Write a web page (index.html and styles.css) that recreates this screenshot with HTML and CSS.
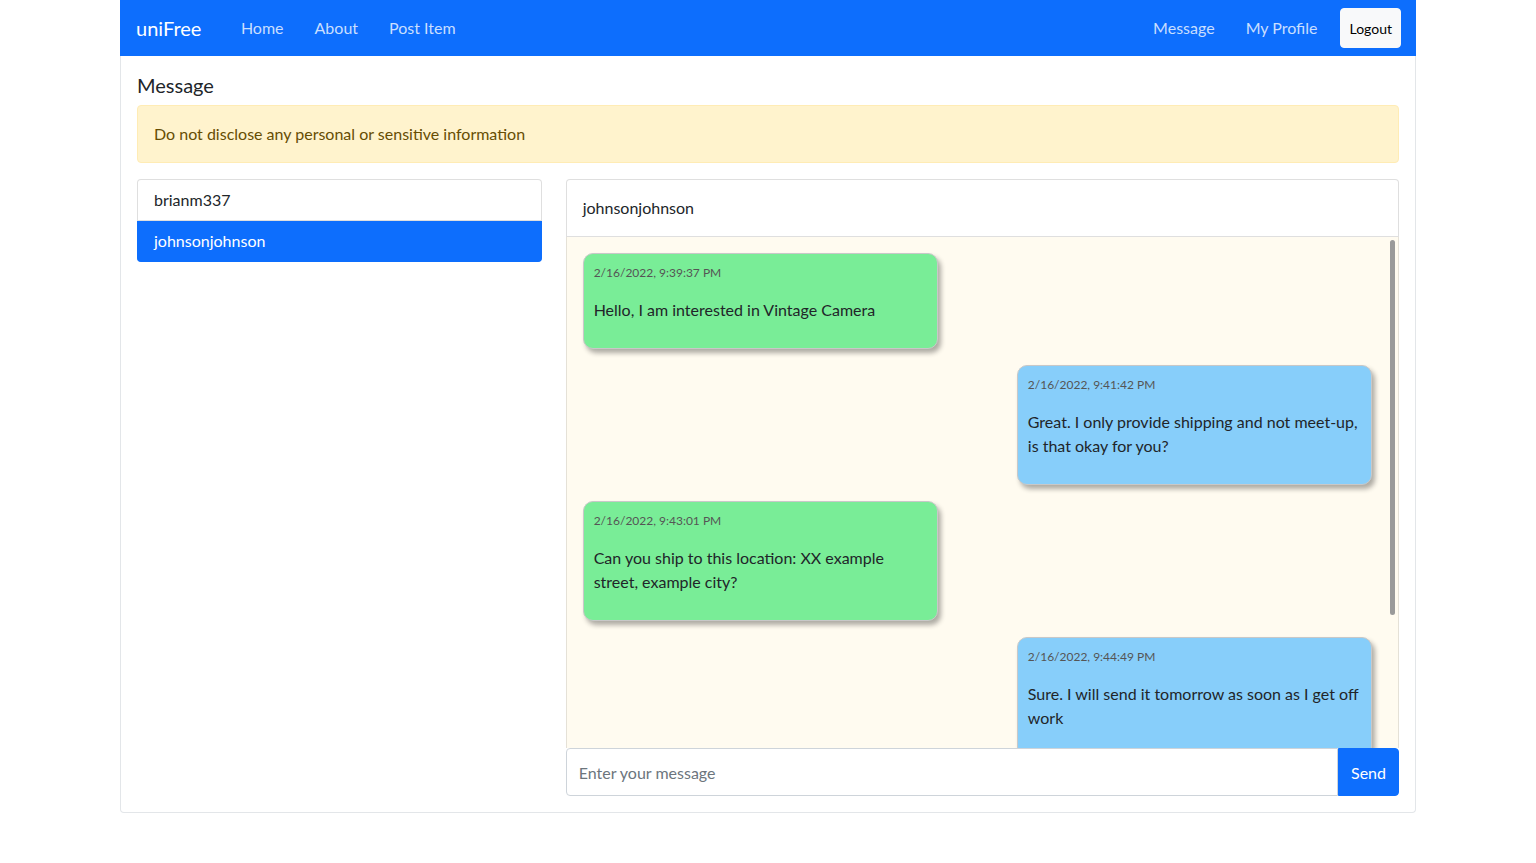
FILE: index.html
```html
<!DOCTYPE html>
<html lang="en">
<head>
<meta charset="utf-8">
<title>uniFree - Message</title>
<link rel="stylesheet" href="styles.css">
</head>
<body>
<div class="page">
  <nav class="navbar">
    <a class="brand" href="#">uniFree</a>
    <ul class="nav nav-left">
      <li><a class="nav-link" href="#">Home</a></li>
      <li><a class="nav-link" href="#">About</a></li>
      <li><a class="nav-link" href="#">Post Item</a></li>
    </ul>
    <ul class="nav nav-right">
      <li><a class="nav-link" href="#">Message</a></li>
      <li><a class="nav-link" href="#">My Profile</a></li>
      <li><button class="logout" type="button">Logout</button></li>
    </ul>
  </nav>
  <main class="card">
    <h5 class="title">Message</h5>
    <div class="alert">Do not disclose any personal or sensitive information</div>
    <div class="row">
      <div class="list">
        <div class="list-item">brianm337</div>
        <div class="list-item active">johnsonjohnson</div>
      </div>
      <section class="chat">
        <div class="chat-header">johnsonjohnson</div>
        <div class="chat-scroll">
          <div class="chat-body">
            <div class="bubble received">
              <p class="date">2/16/2022, 9:39:37 PM</p>
              <p class="text">Hello, I am interested in Vintage Camera</p>
            </div>
            <div class="bubble sent">
              <p class="date">2/16/2022, 9:41:42 PM</p>
              <p class="text">Great. I only provide shipping and not meet-up, is that okay for you?</p>
            </div>
            <div class="bubble received">
              <p class="date">2/16/2022, 9:43:01 PM</p>
              <p class="text">Can you ship to this location: XX example street, example city?</p>
            </div>
            <div class="bubble sent">
              <p class="date">2/16/2022, 9:44:49 PM</p>
              <p class="text">Sure. I will send it tomorrow as soon as I get off work</p>
            </div>
          </div>
          <div class="scroll-thumb"></div>
        </div>
        <form class="input-group">
          <input class="msg-input" type="text" placeholder="Enter your message">
          <button class="send" type="button">Send</button>
        </form>
      </section>
    </div>
  </main>
</div>
</body>
</html>
```

FILE: styles.css
```css
* { box-sizing: border-box; }

body {
  margin: 0;
  font-family: Lato, "Open Sans", sans-serif;
  font-size: 16px;
  line-height: 1.5;
  color: #212529;
  background: #fff;
}

.page {
  width: 1296px;
  margin: 0 auto;
}

/* Navbar */
.navbar {
  display: flex;
  align-items: center;
  height: 56px;
  padding: 0 15px 0 16px;
  background: #0d6efd;
}

.brand {
  font-size: 20px;
  color: #fff;
  text-decoration: none;
  margin-right: 24px;
}

.nav {
  display: flex;
  align-items: center;
  list-style: none;
  margin: 0;
  padding: 0;
}

.nav-right { margin-left: auto; }

.nav-link {
  display: block;
  padding: 8px 15.5px;
  color: rgba(255, 255, 255, 0.78);
  text-decoration: none;
}

.nav-right .nav-link { padding: 8px 16px 8px 15px; }

.logout {
  display: flex;
  align-items: center;
  height: 40px;
  margin-left: 7px;
  padding: 0 8px;
  font-family: inherit;
  font-size: 14px;
  color: #000;
  background: #f8f9fa;
  border: 1px solid #f8f9fa;
  border-radius: 4px;
}

/* Card */
.card {
  border: 1px solid #e3e6e9;
  border-top: none;
  border-radius: 0 0 4px 4px;
  padding: 17px 16px 16px;
}

.title {
  margin: 0 0 8px;
  font-size: 20px;
  font-weight: 400;
  line-height: 1.2;
}

.alert {
  padding: 16px;
  margin-bottom: 16px;
  color: #664d03;
  background: #fff3cd;
  border: 1px solid #ffecb5;
  border-radius: 4px;
}

.row {
  display: flex;
  gap: 24px;
  align-items: flex-start;
}

/* Contact list */
.list {
  width: calc((100% + 24px) / 3 - 24px);
  display: flex;
  flex-direction: column;
}

.list-item {
  padding: 8px 16px;
  border: 1px solid rgba(0, 0, 0, 0.125);
  background: #fff;
}

.list-item:first-child { border-radius: 4px 4px 0 0; }
.list-item + .list-item { border-top-width: 0; }
.list-item:last-child { border-radius: 0 0 4px 4px; }

.list-item.active {
  color: #fff;
  background: #0d6efd;
  border-color: #0d6efd;
}

/* Chat */
.chat {
  flex: 1;
  min-width: 0;
}

.chat-header {
  padding: 16px;
  background: #fff;
  border: 1px solid rgba(0, 0, 0, 0.125);
  border-radius: 4px 4px 0 0;
}

.chat-scroll {
  position: relative;
  height: 511px;
  background: #fffbf0;
  border-left: 1px solid rgba(0, 0, 0, 0.1);
  border-right: 1px solid rgba(0, 0, 0, 0.1);
}

.chat-body {
  height: 100%;
  overflow: hidden;
  padding: 16px 26px 16px 16px;
}

.scroll-thumb {
  position: absolute;
  top: 3px;
  right: 3px;
  width: 5px;
  height: 375px;
  background: #9a9a9a;
  border-radius: 3px;
}

.bubble {
  width: 45%;
  margin-bottom: 16px;
  padding: 10px;
  border: 1px solid #c8c8c8;
  border-radius: 10px;
  box-shadow: 3px 4px 5px rgba(0, 0, 0, 0.32);
}

.bubble.received { background: #79ed97; }
.bubble.sent {
  background: #87cefa;
  margin-left: auto;
}

.bubble p { margin: 0 0 16px; }

.bubble .date {
  font-size: 12px;
  line-height: 18px;
  color: #555;
}

/* Input */
.input-group {
  display: flex;
  margin: 0;
}

.msg-input {
  flex: 1;
  min-width: 0;
  height: 48px;
  padding: 0 12px;
  font-family: inherit;
  font-size: 16px;
  color: #212529;
  background: #fff;
  border: 1px solid #ced4da;
  border-radius: 4px 0 0 4px;
  outline: none;
}

.msg-input::placeholder { color: #6c757d; }

.send {
  height: 48px;
  padding: 0 12px;
  font-family: inherit;
  font-size: 16px;
  color: #fff;
  background: #0d6efd;
  border: 1px solid #0d6efd;
  border-radius: 0 4px 4px 0;
}
```
